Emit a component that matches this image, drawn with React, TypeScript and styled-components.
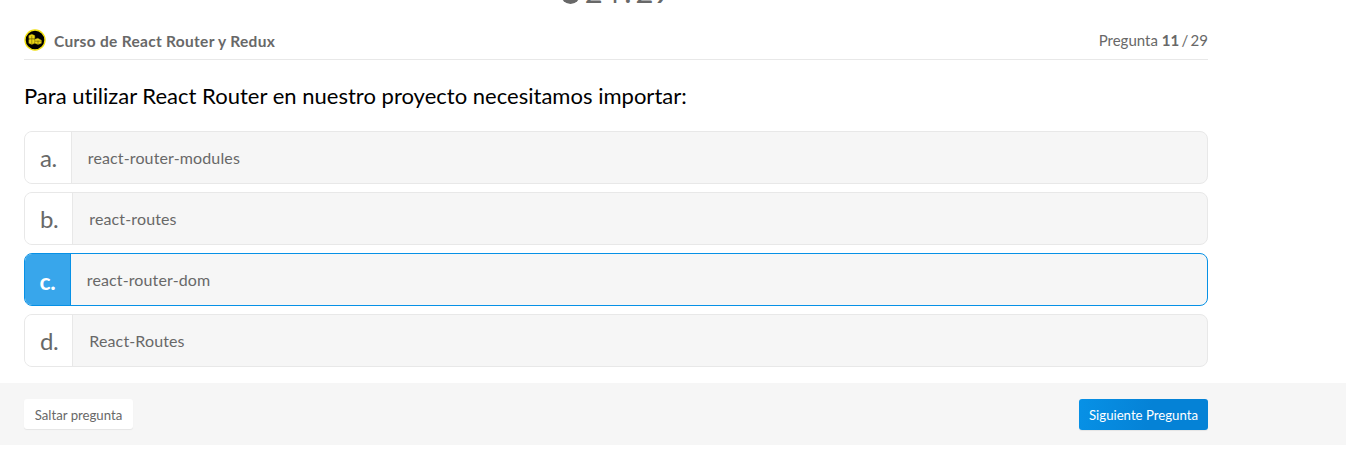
import React from "react";
import styled, { createGlobalStyle, css } from "styled-components";

const GlobalStyle = createGlobalStyle`
  * { box-sizing: border-box; }
  body {
    margin: 0;
    background: #fff;
    color: #686868;
    font-family: Lato, "Liberation Sans", sans-serif;
    font-variant-ligatures: none;
    overflow: hidden;
  }
`;

const Page = styled.main`
  height: 468px;
  overflow: hidden;
`;

const Content = styled.div`
  width: 1184px;
  margin-left: 24px;
`;

const TimerBar = styled.div`
  height: 22px;
  display: flex;
  justify-content: center;
  align-items: flex-end;
  padding-bottom: 18px;
`;

const Timer = styled.div`
  display: flex;
  align-items: flex-end;
  flex: none;
  gap: 5px;
  height: 32px;
  font-size: 31px;
  line-height: 32px;
`;

const Clock = styled.svg`
  display: block;
  width: 19px;
  height: 19px;
`;

const Time = styled.span`
  margin-bottom: -3px;
`;

const Colon = styled.span`
  margin: 0 3.5px;
`;

const Header = styled.header`
  height: 38px;
  display: flex;
  align-items: center;
  justify-content: space-between;
  border-bottom: 1px solid #e8e8e8;
`;

const Course = styled.div`
  display: flex;
  align-items: center;
  gap: 8px;
  font-size: 15.5px;
  font-weight: 700;
  line-height: 22px;
  letter-spacing: 0.3px;
`;

const Badge = styled.svg`
  display: block;
  width: 22px;
  height: 22px;
  margin-top: -2px;
`;

const Progress = styled.div`
  font-size: 15px;
  line-height: 22px;
  margin-top: -2px;
`;

const Total = styled.span`
  word-spacing: -1.5px;
`;

const Question = styled.h1`
  margin: 21px 0 21px;
  color: #000;
  font-size: 22px;
  font-weight: 400;
  line-height: 29px;
  letter-spacing: 0.015px;
`;

const Options = styled.div`
  display: grid;
  gap: 8px;
`;

const Letter = styled.span`
  display: flex;
  align-items: center;
  padding: 0 14px 0 15px;
  background: #fff;
  border-right: 1px solid #e8e8e8;
  font-size: 24px;
  letter-spacing: -0.4px;
`;

const OptionText = styled.span`
  display: flex;
  align-items: center;
  padding: 0 16px;
  font-size: 16px;
  letter-spacing: 0.13px;
`;

const OptionRow = styled.div<{ $selected?: boolean }>`
  height: 53px;
  display: flex;
  overflow: hidden;
  border: 1px solid #e8e8e8;
  border-radius: 8px;
  background: #f6f6f6;
  ${({ $selected }) =>
    $selected &&
    css`
      border-color: #0791e6;
      ${Letter} {
        padding: 2px 14.5px 0;
        background: #38a6eb;
        border-color: #0791e6;
        color: #fff;
        font-size: 23px;
        font-weight: 700;
      }
    `}
`;

const Footer = styled.footer`
  height: 62px;
  margin-top: 16px;
  padding: 0 24px;
  background: #f6f6f6;
`;

const Actions = styled.div`
  width: 1184px;
  height: 100%;
  display: flex;
  align-items: center;
  justify-content: space-between;
`;

const Button = styled.button<{ $primary?: boolean }>`
  height: ${({ $primary }) => ($primary ? 31 : 30)}px;
  width: ${({ $primary }) => ($primary ? 129 : 109)}px;
  padding: 1px 0 0;
  border: 0;
  border-radius: 3px;
  font-family: inherit;
  font-size: 13.2px;
  font-variant-ligatures: none;
  white-space: nowrap;
  color: ${({ $primary }) => ($primary ? "#fff" : "#686868")};
  background: ${({ $primary }) =>
    $primary ? "linear-gradient(100deg, #0791e6 0%, #0582d6 55%)" : "#fff"};
  box-shadow: 0 1px 1px rgba(0, 0, 0, 0.07);
`;

const options = [
  { letter: "a.", text: "react-router-modules" },
  { letter: "b.", text: "react-routes" },
  { letter: "c.", text: "react-router-dom", selected: true },
  { letter: "d.", text: "React-Routes" },
];

export default function App() {
  return (
    <Page>
      <GlobalStyle />
      <Content>
        <TimerBar>
          <Timer>
            <Clock viewBox="0 0 20 20">
              <circle cx="10" cy="10" r="10" fill="#686868" />
              <path d="M10 4v6l4 2" fill="none" stroke="#fff" strokeWidth="2" />
            </Clock>
            <Time>
              24<Colon>:</Colon>29
            </Time>
          </Timer>
        </TimerBar>
        <Header>
          <Course>
            <Badge viewBox="0 0 22 22">
              <circle cx="11" cy="11" r="10" fill="#000" stroke="#f0df10" strokeWidth="1.4" />
              <g fill="#ecd714" stroke="#a3920c" strokeWidth=".4">
                <path d="M4.8 6.6 7.8 5.2l3 1.4v2.9L7.8 10.8l-3-1.3Z" />
                <path d="M4.8 10.6 7.8 9.2l3 1.4v3.6l-3 1.3-3-1.3Z" />
                <path d="m10.8 10.3 3-1.1 3.6 2v3.1l-3.3 1.2-3.3-1.3Z" />
              </g>
              <path
                d="M7.8 6.8v8.4M14 11.6v3.6M5.2 9.9h5.4M11 12.2h6"
                fill="none"
                stroke="#6b6008"
                strokeWidth=".6"
              />
            </Badge>
            <span>Curso de React Router y Redux</span>
          </Course>
          <Progress>
            Pregunta <b>11</b>
            <Total> / 29</Total>
          </Progress>
        </Header>
        <Question>Para utilizar React Router en nuestro proyecto necesitamos importar:</Question>
        <Options>
          {options.map((o) => (
            <OptionRow key={o.letter} $selected={o.selected}>
              <Letter>{o.letter}</Letter>
              <OptionText>{o.text}</OptionText>
            </OptionRow>
          ))}
        </Options>
      </Content>
      <Footer>
        <Actions>
          <Button>Saltar pregunta</Button>
          <Button $primary>Siguiente Pregunta</Button>
        </Actions>
      </Footer>
    </Page>
  );
}
